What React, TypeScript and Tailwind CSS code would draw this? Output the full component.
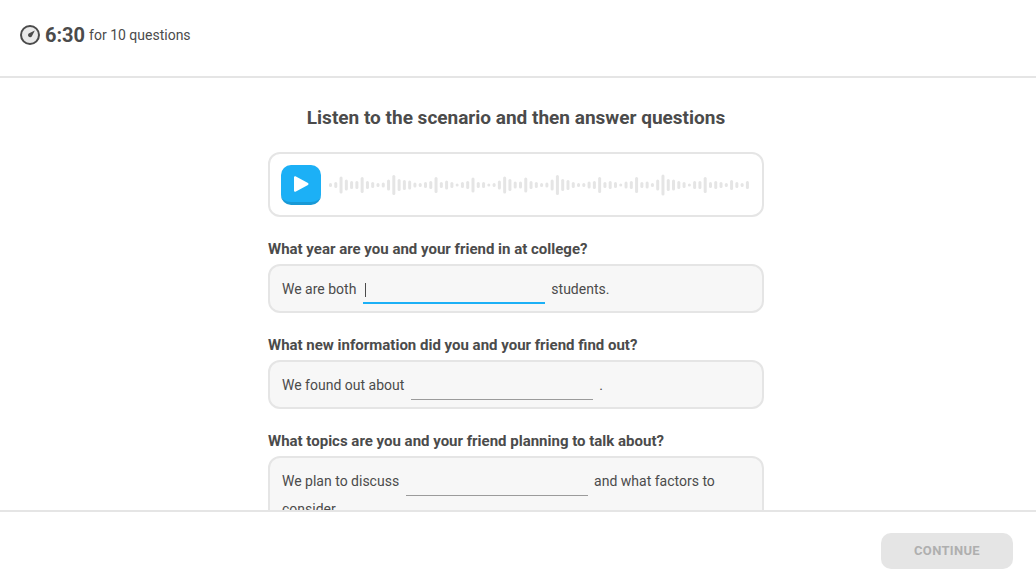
import { clsx } from "clsx";

const waveform = [
  4, 6, 17, 11, 8, 8, 16, 8, 6, 4, 5, 11, 20, 12, 10, 9, 5, 4, 6, 8,
  16, 6, 9, 6, 3, 6, 8, 15, 6, 6, 3, 4, 9, 17, 12, 7, 7, 15, 8, 6,
  4, 5, 11, 20, 12, 10, 6, 4, 4, 7, 8, 16, 6, 8, 6, 3, 7, 8, 16, 6,
  7, 4, 11, 21, 12, 11, 8, 6, 3, 8, 8, 16, 6, 8, 6, 4, 10, 6, 4, 8,
];

const questions = [
  {
    id: "year",
    prompt: "What year are you and your friend in at college?",
    before: "We are both",
    after: "students.",
    active: true,
  },
  {
    id: "information",
    prompt: "What new information did you and your friend find out?",
    before: "We found out about",
    after: ".",
    active: false,
  },
  {
    id: "topics",
    prompt: "What topics are you and your friend planning to talk about?",
    before: "We plan to discuss",
    after: "and what factors to consider.",
    active: false,
  },
];

type Question = (typeof questions)[number];

function TimerIcon() {
  return (
    <svg width="22" height="22" viewBox="0 0 22 22" fill="none" aria-hidden="true">
      <circle cx="11" cy="11" r="9" fill="#e9e9e9" stroke="#4b4b4b" strokeWidth="2" />
      <path d="M15.8 6.6 12.9 12.2a2.1 2.1 0 1 1-2.7-3z" fill="#4b4b4b" />
    </svg>
  );
}

function Waveform() {
  return (
    <svg className="h-6 min-w-0 flex-1" viewBox="0 0 422 24" preserveAspectRatio="none" aria-hidden="true">
      {waveform.map((height, i) => (
        <rect
          key={i}
          x={i * 5.29}
          y={12 - height / 2}
          width="3"
          height={height}
          rx="1.5"
          fill="#e5e5e5"
        />
      ))}
    </svg>
  );
}

function AudioPlayer() {
  return (
    <div className="flex items-center gap-2 rounded-xl border-2 border-[#e5e5e5] pt-[11px] pr-3 pb-2.5 pl-[11px]">
      <button
        type="button"
        aria-label="Play"
        className="flex size-10 shrink-0 items-center justify-center rounded-[10px] border-b-3 border-[#1899d6] bg-[#1cb0f6]"
      >
        <svg width="18" height="18" viewBox="0 0 18 18" aria-hidden="true">
          <path
            d="M3 2.2v13.6L15.5 9z"
            fill="#fff"
            stroke="#fff"
            strokeWidth="2"
            strokeLinejoin="round"
          />
        </svg>
      </button>
      <Waveform />
    </div>
  );
}

function QuestionField({ question }: { question: Question }) {
  return (
    <div>
      <label htmlFor={question.id} className="block text-[15px] leading-5 font-bold">
        {question.prompt}
      </label>
      <div className="mt-[5px] rounded-xl border-2 border-[#e5e5e5] bg-[#f7f7f7] px-3 pt-[9px] pb-2 text-sm leading-7">
        {question.before}{" "}
        <span className="relative mx-[3px] -mb-px inline-block align-top">
          <input
            id={question.id}
            type="text"
            className={clsx(
              "block h-[29px] w-[182px] bg-transparent px-0.5 caret-transparent outline-none",
              question.active ? "border-b-2 border-[#1cb0f6]" : "border-b border-[#9b9b9b]"
            )}
          />
          {question.active && <span className="absolute top-2 left-0.5 h-3.5 w-px bg-[#4b4b4b]" />}
        </span>{" "}
        {question.after}
      </div>
    </div>
  );
}

export default function App() {
  return (
    <div className="flex h-screen flex-col bg-white font-[Roboto,sans-serif] text-[#4b4b4b]">
      <header className="flex shrink-0 items-center border-b-2 border-[#e5e5e5] px-[19px] pt-5 pb-[26px]">
        <TimerIcon />
        <span className="ml-1 text-xl leading-[30px] font-bold">6:30</span>
        <span className="ml-1 text-sm">for 10 questions</span>
      </header>

      <main className="min-h-0 flex-1 overflow-y-auto pr-1 [scrollbar-width:none]">
        <div className="mx-auto flex max-w-[496px] flex-col gap-[22px] pt-7 pb-6">
          <h1 className="text-center text-[19px] leading-6 font-bold">
            Listen to the scenario and then answer questions
          </h1>
          <AudioPlayer />
          {questions.map((question) => (
            <QuestionField key={question.id} question={question} />
          ))}
        </div>
      </main>

      <footer className="flex shrink-0 justify-end border-t-2 border-[#e5e5e5] px-[23px] pt-[21px] pb-[11px]">
        <button
          type="button"
          disabled
          className="h-9 w-[132px] rounded-[10px] bg-[#e5e5e5] text-[13px] font-bold tracking-wide text-[#afafaf] uppercase"
        >
          Continue
        </button>
      </footer>
    </div>
  );
}
